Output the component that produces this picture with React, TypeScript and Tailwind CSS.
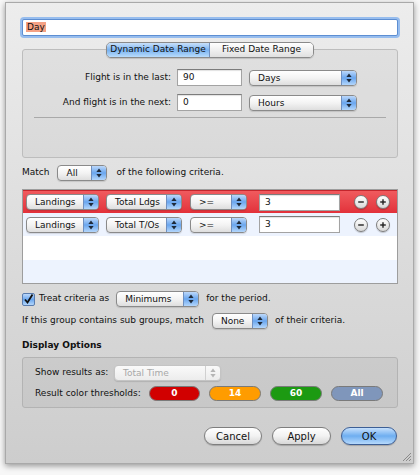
import clsx from "clsx";

const font = "font-['DejaVu_Sans',_'Liberation_Sans',_sans-serif]";

const Arrows = ({ dim }: { dim?: boolean }) => (
  <svg width="6" height="10" viewBox="0 0 6 10">
    <path d="M3 0.5 L5.6 4 L0.4 4 Z" fill={dim ? "#b5b5b5" : "#1e2a3a"} />
    <path d="M3 9.5 L5.6 6 L0.4 6 Z" fill={dim ? "#b5b5b5" : "#1e2a3a"} />
  </svg>
);

const Popup = ({ label, w, disabled }: { label: string; w: string; disabled?: boolean }) => (
  <div
    className={clsx(
      "flex h-[16px] shrink-0 items-stretch rounded-[4px] border shadow-[0_1px_1px_rgba(0,0,0,0.12)]",
      disabled ? "border-[#c4c4c4] bg-gradient-to-b from-[#fafafa] to-[#ececec]" : "border-[#8a8a8a] bg-gradient-to-b from-white via-[#f3f3f3] to-[#dedede]",
      w
    )}
  >
    <span className={clsx("flex-1 truncate pl-[8px] leading-[14px]", disabled && "text-[#a8a8a8]")}>{label}</span>
    <span
      className={clsx(
        "flex w-[15px] items-center justify-center rounded-r-[3px] border-l",
        disabled ? "border-[#d0d0d0]" : "border-[#6f8fbf] bg-gradient-to-b from-[#bcd8fa] via-[#6aa6ee] to-[#b3d6fb]"
      )}
    >
      <Arrows dim={disabled} />
    </span>
  </div>
);

const Field = ({ value, w }: { value: string; w: string }) => (
  <div className={clsx("h-[17px] shrink-0 border border-[#a3a3a3] border-t-[#7c7c7c] bg-white pl-[5px] leading-[15px] shadow-[inset_0_1px_1px_rgba(0,0,0,0.12)]", w)}>
    {value}
  </div>
);

const RoundBtn = ({ plus }: { plus?: boolean }) => (
  <div className="flex h-[14px] w-[14px] items-center justify-center rounded-full border border-[#7d7d7d] bg-gradient-to-b from-white to-[#d9d9d9] shadow-[0_1px_1px_rgba(0,0,0,0.2)]">
    <svg width="8" height="8" viewBox="0 0 8 8">
      <path d="M1.2 4 H6.8" stroke="#222" strokeWidth="1.4" />
      {plus && <path d="M4 1.2 V6.8" stroke="#222" strokeWidth="1.4" />}
    </svg>
  </div>
);

const CriteriaRow = ({ second, bg }: { second: string; bg: string }) => (
  <div className={clsx("flex h-[23px] items-center pl-[3px]", bg)}>
    <Popup label="Landings" w="w-[73px]" />
    <div className="ml-[7px]">
      <Popup label={second} w="w-[76px]" />
    </div>
    <div className="ml-[8px]">
      <Popup label=">=" w="w-[57px]" />
    </div>
    <div className="ml-[12px]">
      <Field value="3" w="w-[81px]" />
    </div>
    <div className="ml-[14px] flex gap-[8px]">
      <RoundBtn />
      <RoundBtn plus />
    </div>
  </div>
);

const Pill = ({ label, c, w }: { label: string; c: string; w: string }) => (
  <div className={clsx("flex h-[15px] items-center justify-center rounded-full border border-[#7a7a7a] font-bold text-white", c, w)}>
    {label}
  </div>
);

const AquaBtn = ({ label, w, def }: { label: string; w: string; def?: boolean }) => (
  <div
    className={clsx(
      "flex h-[18px] items-center justify-center rounded-full border text-[10px] shadow-[0_1px_1px_rgba(0,0,0,0.2)]",
      def ? "border-[#3d5f95] bg-gradient-to-b from-[#c6e0fc] via-[#6eaef0] to-[#b6dafd]" : "border-[#7e7e7e] bg-gradient-to-b from-white via-[#f2f2f2] to-[#d8d8d8]",
      w
    )}
  >
    {label}
  </div>
);

export default function App() {
  return (
    <div className={clsx("h-[475px] w-[420px] bg-[#f7f7f7] pt-[2px] pl-[5px] text-[9px] text-[#111]", font)}>
      <div className="relative flex h-[462px] w-[409px] flex-col border border-[#a9a9a9] bg-gradient-to-b from-[#ededed] to-[#cdcdcd] pl-[16px] pr-[15px] pt-[16px] shadow-[0_2px_6px_rgba(0,0,0,0.4)]">
        {/* name */}
        <div className="h-[17px] rounded-[2px] border border-[#5d8ed2] bg-white pl-[3px] leading-[15px] shadow-[0_0_0_2px_#97bdee]">
          <span className="bg-[#f5a184] px-[1px]">Day</span>
        </div>

        {/* tabs */}
        <div className="relative z-10 mt-[6px] flex justify-center">
          <div className="flex h-[16px] overflow-hidden rounded-[5px] border border-[#8a8a8a] shadow-[0_1px_1px_rgba(0,0,0,0.15)]">
            <div className="flex w-[103px] items-center justify-center border-r border-[#6f8fbf] bg-gradient-to-b from-[#c9e0fa] via-[#78b2f0] to-[#b9dcfb]">
              Dynamic Date Range
            </div>
            <div className="flex w-[103px] items-center justify-center bg-gradient-to-b from-white to-[#e0e0e0]">Fixed Date Range</div>
          </div>
        </div>

        {/* tab box */}
        <div className="-mt-[9px] h-[109px] rounded-[3px] border border-[#bdbdbd] bg-black/[0.04] pt-[19px]">
          <div className="flex items-center">
            <div className="w-[148px] text-right">Flight is in the last:</div>
            <div className="ml-[6px]">
              <Field value="90" w="w-[65px]" />
            </div>
            <div className="ml-[7px]">
              <Popup label="Days" w="w-[108px]" />
            </div>
          </div>
          <div className="mt-[8px] flex items-center">
            <div className="w-[148px] text-right">And flight is in the next:</div>
            <div className="ml-[6px]">
              <Field value="0" w="w-[65px]" />
            </div>
            <div className="ml-[7px]">
              <Popup label="Hours" w="w-[108px]" />
            </div>
          </div>
          <div className="mx-[11px] mt-[6px] h-[2px] border-t border-[#a9a9a9] border-b-white" />
        </div>

        {/* match */}
        <div className="mt-[7px] flex h-[16px] items-center">
          <span>Match</span>
          <div className="ml-[8px]">
            <Popup label="All" w="w-[50px]" />
          </div>
          <span className="ml-[9px]">of the following criteria.</span>
        </div>

        {/* criteria list */}
        <div className="mt-[8px] flex h-[95px] flex-col border border-[#9d9d9d] bg-white">
          <CriteriaRow second="Total Ldgs" bg="bg-gradient-to-b from-[#f05a5e] to-[#e2303a] border-t border-[#c4252c]" />
          <CriteriaRow second="Total T/Os" bg="bg-[#edf3fe]" />
          <div className="h-[24px] bg-white" />
          <div className="flex-1 bg-[#edf3fe]" />
        </div>

        {/* treat */}
        <div className="mt-[7px] flex h-[16px] items-center">
          <div className="flex h-[13px] w-[13px] items-center justify-center rounded-[2px] border border-[#5a7cae] bg-gradient-to-b from-[#bcd8fa] via-[#6aa6ee] to-[#b3d6fb]">
            <svg width="11" height="11" viewBox="0 0 11 11">
              <path d="M2 5.5 L4.5 8.5 L9.5 0.5" stroke="#111" strokeWidth="1.8" fill="none" />
            </svg>
          </div>
          <span className="ml-[4px]">Treat criteria as</span>
          <div className="ml-[7px]">
            <Popup label="Minimums" w="w-[83px]" />
          </div>
          <span className="ml-[7px]">for the period.</span>
        </div>

        <div className="mt-[6px] flex h-[16px] items-center">
          <span>If this group contains sub groups, match</span>
          <div className="ml-[8px]">
            <Popup label="None" w="w-[56px]" />
          </div>
          <span className="ml-[7px]">of their criteria.</span>
        </div>

        <div className="mt-[10px] h-[12px] font-bold leading-[12px]">Display Options</div>

        <div className="mt-[6px] h-[51px] rounded-[3px] border border-[#b3b3b3] bg-black/[0.04] pl-[12px] pt-[7px]">
          <div className="flex items-center">
            <span className="w-[79px]">Show results as:</span>
            <Popup label="Total Time" w="w-[107px]" disabled />
          </div>
          <div className="mt-[5px] flex items-center">
            <span className="w-[114px]">Result color thresholds:</span>
            <div className="flex gap-[9px]">
              <Pill label="0" c="bg-[#d10000]" w="w-[51px]" />
              <Pill label="14" c="bg-[#ff9c00]" w="w-[52px]" />
              <Pill label="60" c="bg-[#1c9a12]" w="w-[52px]" />
              <Pill label="All" c="bg-[#7f96bb]" w="w-[52px]" />
            </div>
          </div>
        </div>

        <div className="mt-[19px] flex justify-end gap-[10px] pr-[1px]">
          <AquaBtn label="Cancel" w="w-[58px]" />
          <AquaBtn label="Apply" w="w-[59px]" />
          <AquaBtn label="OK" w="w-[56px]" def />
        </div>

        <svg className="absolute bottom-[1px] right-[1px]" width="11" height="11" viewBox="0 0 11 11">
          <path d="M10 2 L2 10 M10 5 L5 10 M10 8 L8 10" stroke="#8a8a8a" strokeWidth="1" />
        </svg>
      </div>
    </div>
  );
}
